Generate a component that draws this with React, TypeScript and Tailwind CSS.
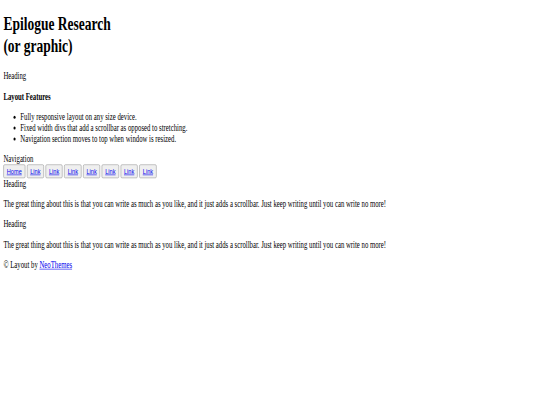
import React from 'react';

const links = ['Home', 'Link', 'Link', 'Link', 'Link', 'Link', 'Link', 'Link'];

const copy =
  'The great thing about this is that you can write as much as you like, and it just adds a scrollbar. Just keep writing until you can write no more!';

export default function App() {
  return (
    <div className="h-[405px] w-[540px] overflow-hidden bg-white">
      {/* page is laid out at its native size, then squeezed into the frame */}
      <div className="w-[1280px] origin-top-left scale-x-[0.422] scale-y-[0.6] p-2 font-['Liberation_Serif',serif] text-[16px] leading-[normal] text-black">
        <h1 className="mt-[13px] mb-[23px] text-[32px] font-bold">
          Epilogue Research
          <br />
          (or graphic)
        </h1>
        <p className="my-4">Heading</p>
        <p className="my-4 font-bold">Layout Features</p>
        <ul className="my-4 list-disc pl-10">
          <li>Fully responsive layout on any size device.</li>
          <li>Fixed width divs that add a scrollbar as opposed to stretching.</li>
          <li>Navigation section moves to top when window is resized.</li>
        </ul>
        <div>Navigation</div>
        <div className="flex gap-[4px]">
          {links.map((l, i) => (
            <button
              key={i}
              className="rounded-[3px] border border-[#8f8f8f] bg-[#efefef] px-[7px] py-[3px] font-['Liberation_Sans',sans-serif] text-[13.33px] leading-[normal]"
            >
              <a href="#" className="text-[#0000ee] underline">{l}</a>
            </button>
          ))}
        </div>
        <p className="mb-4">Heading</p>
        <p className="my-4">{copy}</p>
        <p className="my-4">Heading</p>
        <p className="my-4">{copy}</p>
        <p className="my-4">
          © Layout by <a href="#" className="text-[#0000ee] underline">NeoThemes</a>
        </p>
      </div>
    </div>
  );
}
